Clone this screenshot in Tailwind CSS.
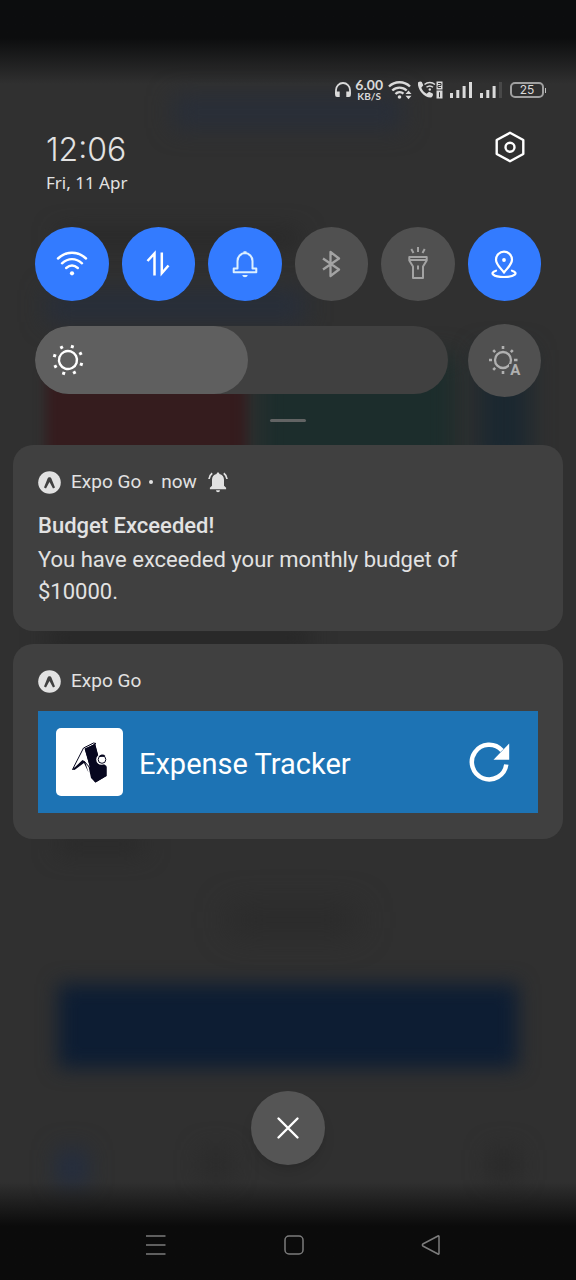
<!DOCTYPE html>
<html lang="en">
<head>
<meta charset="utf-8">
<meta name="viewport" content="width=device-width, initial-scale=1">
<title>Notification shade</title>
<script src="https://cdn.jsdelivr.net/npm/@tailwindcss/browser@4"></script>
</head>
<body class="bg-[#303030] font-[Roboto,sans-serif] text-[#e2e2e2]">
<div class="relative isolate flex min-h-screen flex-col overflow-hidden">

  <!-- Blurred app behind the shade -->
  <div class="absolute inset-0 -z-10 overflow-hidden" aria-hidden="true">
    <div class="absolute top-[96px] left-[30%] h-8 w-[40%] bg-[#282e39] blur-md"></div>
    <div class="absolute top-[232px] left-[10%] h-3 w-[42%] bg-[#242424] blur-md"></div>
    <div class="absolute top-[290px] left-[8%] h-8 w-[45%] bg-[#272e3a] blur-md"></div>
    <div class="absolute top-[372px] left-[8%] h-[110px] w-[35%] bg-[#351c1e] blur-[6px]"></div>
    <div class="absolute top-[355px] left-[45%] h-[120px] w-[34%] bg-[#1c2d2c] blur-md"></div>
    <div class="absolute top-[350px] left-[83%] h-[120px] w-[9%] bg-[#1b2830] blur-md"></div>
    <div class="absolute top-[630px] left-[8%] h-4 w-[46%] bg-[#222222] blur-md"></div>
    <div class="absolute top-[836px] left-[10%] h-4 w-[15%] bg-[#282828] blur-md"></div>
    <div class="absolute top-[908px] left-[40%] h-6 w-[22%] bg-[#292929] blur-lg"></div>
    <div class="absolute top-[984px] left-[10%] h-[84px] w-[80%] bg-[#0d1d33] blur-[10px]"></div>
    <div class="absolute top-[1150px] left-[10%] h-[36px] w-[5%] bg-[#222d42] blur-md"></div>
    <div class="absolute top-[1150px] left-[35%] h-[30px] w-[5%] bg-[#2a2a2a] blur-md"></div>
    <div class="absolute top-[1150px] left-[85%] h-[30px] w-[5%] bg-[#282828] blur-md"></div>
    <div class="absolute inset-x-0 top-0 h-[84px] bg-linear-to-b from-[#0c0d0e] from-45% to-transparent"></div>
    <div class="absolute inset-x-0 bottom-0 h-[98px] bg-linear-to-t from-[#0b0b0b] from-55% to-transparent"></div>
  </div>

  <!-- Status bar -->
  <header class="mt-[78px] flex h-6 items-center justify-end pr-[30px] text-[#dadada]">
    <svg class="h-5 w-[18px]" viewBox="0 0 18 20" fill="none" stroke="currentColor" stroke-width="1.8" role="img" aria-label="Headphones"><path d="M2 14V10a7 7 0 0 1 14 0v4"/><path d="M1.100 11.500h4.600V17H3a1.900 1.900 0 0 1-1.900-1.900zM16.900 11.500h-4.600V17H15a1.900 1.900 0 0 0 1.900-1.900z" fill="currentColor" stroke="none"/></svg>
    <p class="ml-[3px] flex flex-col items-center font-[Lato,sans-serif] font-bold"><span class="text-[14px] leading-[12px]">6.00</span><span class="text-[10px] leading-[10px]">KB/S</span></p>
    <svg class="ml-[5px] h-5 w-6" viewBox="0 0 24 20" fill="none" stroke="currentColor" stroke-width="2.400" role="img" aria-label="Wi-Fi"><path d="M1 6.500a15 15 0 0 1 21 0M4.300 10.500a10.500 10.500 0 0 1 14.400 0M7.500 14a6 6 0 0 1 8-.3"/><circle cx="11.500" cy="17" r="1.800" fill="currentColor" stroke="none"/><path d="M17.500 14l3-3.400 3 3.400zM17.500 15.800l3 3.400 3-3.400z" fill="currentColor" stroke="none"/></svg>
    <svg class="ml-[5px] h-5 w-[27px]" viewBox="0 0 27 20" fill="none" stroke="currentColor" role="img" aria-label="Wi-Fi calling"><path d="M1 2.500c1-1 3-1.500 3.800-.5l1.500 3.200-2 2.600c1 2.700 2.700 4.500 5.300 5.900l2.500-2 3.600 1.800c.8 1-.2 3.500-1.500 4C8.500 18.500 0 10 1 2.500z" fill="currentColor" stroke="none"/><path d="M7.500 4.500a8 8 0 0 1 10.500 0M9.500 7.300a5 5 0 0 1 6.500 0" stroke-width="1.500"/><circle cx="12.800" cy="9.500" r="1.200" fill="currentColor" stroke="none"/><path d="M19.500 1.500h6v8h-6zM19.500 10.500h6v8h-6z" fill="currentColor" stroke="none"/><path d="M21 3.500h3v2h-3v2h3M22.500 12.200v5" stroke="#303030"/></svg>
    <svg class="ml-[5px] h-5 w-6" viewBox="0 0 24 20" fill="currentColor" role="img" aria-label="SIM 1 signal"><path d="M1 13h3v5H1zM7.300 10h3v8h-3zM13.600 6h3v12h-3zM20 2h3v16h-3z"/></svg>
    <svg class="ml-[6px] h-5 w-6" viewBox="0 0 24 20" fill="currentColor" role="img" aria-label="SIM 2 signal"><path d="M1 13h3v5H1zM7.300 10h3v8h-3zM13.600 6h3v12h-3z"/><path d="M20 2h3v16h-3z" fill="#484848"/></svg>
    <p class="ml-[7px] flex h-4 w-[34px] items-center justify-center rounded-[5px] border-2 border-[#a0a0a0] font-[Inter,sans-serif] text-[12px] leading-3" aria-label="Battery 25 percent">25</p>
    <span class="ml-px h-[5px] w-px bg-[#c0c0c0]"></span>
  </header>

  <section class="flex items-start justify-between pt-[27px] pr-[51px] pl-[46px]">
    <div>
      <p class="font-[Inter,sans-serif] text-[32px] leading-[42px] font-light">12:06</p>
      <p class="font-['Noto_Sans',sans-serif] text-[17px] leading-6">Fri, 11 Apr</p>
    </div>
    <button aria-label="Settings" class="mt-[2px] text-white">
      <svg class="h-8 w-[30px]" viewBox="0 0 30 32" fill="none" stroke="currentColor" stroke-width="2.400" stroke-linejoin="round"><path d="M15 1.800L28.300 9v14L15 30.200 1.700 23V9z"/><circle cx="15" cy="16.300" r="4.500"/></svg>
    </button>
  </section>

  <!-- Quick toggles -->
  <section class="mt-[32px] grid grid-cols-6 gap-x-[13px] px-[35px]">
    <button aria-label="Wi-Fi" aria-pressed="true" class="flex aspect-square items-center justify-center rounded-full bg-[#337bff] text-white"><svg class="h-8 w-8" viewBox="0 0 32 32" fill="none" stroke="currentColor" stroke-width="2.400" stroke-linecap="round"><path d="M2 10.500c8.500-7.600 19.500-7.600 28 0M6 15.300c6-5.600 14-5.600 20 0M10.200 20c3.600-3 8-3 11.600 0"/><circle cx="16" cy="25.300" r="2.100" fill="currentColor" stroke="none"/></svg></button>
    <button aria-label="Mobile data" aria-pressed="true" class="flex aspect-square items-center justify-center rounded-full bg-[#337bff] text-white"><svg class="h-8 w-8" viewBox="0 0 32 32" fill="none" stroke="currentColor" stroke-width="2.500"><path d="M5.500 13l7-7.500V27.500M19.800 4.500V25.200l6.700-7.700"/></svg></button>
    <button aria-label="Ring" aria-pressed="true" class="flex aspect-square items-center justify-center rounded-full bg-[#337bff] text-[#dcefff]"><svg class="h-8 w-8" viewBox="0 0 32 32" fill="none" stroke="currentColor" stroke-width="2" stroke-linejoin="round"><path d="M16 5a8 8 0 0 0-7.500 8v7.500h-3.800v3.700h22.600v-3.700h-3.800V13A8 8 0 0 0 16 5z"/><path d="M14.500 5V3.300h3V5zM13.300 27h5.400c-.5 3-4.900 3-5.400 0z" fill="currentColor" stroke="none"/></svg></button>
    <button aria-label="Bluetooth" aria-pressed="false" class="flex aspect-square items-center justify-center rounded-full bg-[#505050] text-[#a3a3a3]"><svg class="h-8 w-8" viewBox="0 0 32 32" fill="none" stroke="currentColor" stroke-width="2.300" stroke-linejoin="round"><path d="M8 10.500l16 11-8.500 6.500V4L24 10.500 8 21.500"/></svg></button>
    <button aria-label="Flashlight" aria-pressed="false" class="flex aspect-square items-center justify-center rounded-full bg-[#505050] text-[#a3a3a3]"><svg class="h-9 w-8" viewBox="0 0 32 36" fill="none" stroke="currentColor" stroke-width="2" stroke-linejoin="round"><path d="M7.300 11h17.400v3.500l-3.700 6V32H11V20.500l-3.700-6zM8 14h16M16 19.500v4M16 1v5M9.300 3l2.200 4M22.700 3l-2.200 4"/></svg></button>
    <button aria-label="Location" aria-pressed="true" class="flex aspect-square items-center justify-center rounded-full bg-[#337bff] text-white"><svg class="h-8 w-8" viewBox="0 0 32 32" fill="none" stroke="currentColor" stroke-width="2.200" stroke-linejoin="round"><path d="M16 24.500c-3-4-8-8-8-12.800a8 8 0 0 1 16 0c0 4.800-5 8.800-8 12.800z"/><circle cx="16" cy="12" r="1.900" fill="currentColor" stroke="none"/><path d="M8 22.700c-7 2.200-3 6.300 8 6.300s15-4.100 8-6.300" stroke-linecap="round"/></svg></button>
  </section>

  <section class="mt-[23px] grid grid-cols-6 items-center gap-x-[13px] px-[35px]">
    <label class="relative col-span-5 mr-[7px] flex h-[68px] overflow-hidden rounded-full bg-[#404040]">
      <span class="flex items-center rounded-full bg-[#5f5f5f] pl-[17px] text-white" style="width:51.6%"><svg class="h-8 w-8" viewBox="0 0 32 32" fill="none" stroke="currentColor" stroke-width="2.400"><g transform="rotate(18 16 16)"><circle cx="16" cy="16" r="9"/><path stroke-width="3" d="M16 .5v3M16 28.500v3M.5 16h3M28.500 16h3M5 5l2.100 2.100M24.900 24.900L27 27M5 27l2.100-2.100M24.900 7.100L27 5"/></g></svg></span>
      <input type="range" min="0" max="100" value="52" aria-label="Brightness" class="absolute inset-0 h-full w-full cursor-pointer opacity-0">
    </label>
    <button aria-label="Automatic brightness" aria-pressed="false" class="flex aspect-square items-center justify-center rounded-full bg-[#505050] text-[#b0b0b0]">
      <span class="relative"><svg class="h-[30px] w-[30px]" viewBox="0 0 30 30" fill="none" stroke="currentColor" stroke-width="2.300"><circle cx="14" cy="15" r="8"/><path stroke-width="2.600" d="M14 1v3M14 26v3M0 15h3M25 15h3.500M4.200 5.200l2 2M4.200 24.800l2-2M21.800 7.200l2-2"/></svg><span class="absolute -right-[2px] -bottom-px bg-[#505050] px-px text-[15px] leading-[12px] font-bold">A</span></span>
    </button>
  </section>

  <div class="mx-auto mt-[22px] h-[3px] w-9 rounded-full bg-[#626464]"></div>

  <!-- Notifications -->
  <main class="mt-[23px] flex flex-col gap-[13px] px-[13px]">
    <article class="rounded-[20px] bg-[#404040] px-[25px] pt-[25px] pb-[23px]">
      <div class="flex h-6 items-center text-[19px] leading-6">
        <svg class="mr-[10px] h-[23px] w-[23px]" viewBox="0 0 23 23" aria-hidden="true"><circle cx="11.500" cy="11.500" r="11.300" fill="#e2e2e2"/><path d="M6 16.600L9.600 7.500c.6-1.600 3.200-1.600 3.800 0L17 16.600l-2 .8-3.500-6.400L8 17.400z" fill="#404040"/></svg>
        <span>Expo Go</span><span class="mx-2 h-1 w-1 rounded-full bg-[#e2e2e2]"></span><span>now</span>
        <svg class="ml-[11px] h-[22px] w-[20px]" viewBox="0 0 20 22" fill="currentColor" role="img" aria-label="Alerting"><path d="M10 1.500c-.9 0-1.400.6-1.400 1.500C5.500 3.700 4 6 4 8.700v6L1.900 16.800V18.300h16.200v-1.500L16 14.700v-6c0-2.700-1.500-5-4.600-5.700 0-.9-.5-1.500-1.400-1.500zM8 19.200h4a2 2 0 0 1-4 0z"/><path d="M4.200 2.200A8 8 0 0 0 1 8M15.800 2.200A8 8 0 0 1 19 8" fill="none" stroke="currentColor" stroke-width="1.700"/></svg>
      </div>
      <h2 class="mt-4 text-[22px] leading-8 font-medium">Budget Exceeded!</h2>
      <p class="mt-[2px] text-[22px] leading-8">You have exceeded your monthly budget of $10000.</p>
    </article>

    <article class="rounded-[20px] bg-[#404040] px-[25px] pt-[25px] pb-[26px]">
      <div class="flex h-6 items-center text-[19px] leading-6">
        <svg class="mr-[10px] h-[23px] w-[23px]" viewBox="0 0 23 23" aria-hidden="true"><circle cx="11.500" cy="11.500" r="11.300" fill="#e2e2e2"/><path d="M6 16.600L9.600 7.500c.6-1.600 3.200-1.600 3.800 0L17 16.600l-2 .8-3.500-6.400L8 17.400z" fill="#404040"/></svg>
        <span>Expo Go</span>
      </div>
      <div class="mt-[18px] flex h-[102px] items-center bg-[#1d73b4] pr-[26px] pl-[18px] text-white">
        <svg class="h-[68px] w-[67px]" viewBox="0 0 67 68" role="img" aria-label="Expense Tracker logo"><rect width="67" height="68" rx="5" fill="#fff"/><path d="M28.500 19.500L39 15l3.500 13.500 1 4.500 7 5v10L39.500 54.500 35 50z" fill="#07071f"/><path d="M16.500 41.500L27.500 20l10-5 2.500.5-10.500 6L35 41l-6.500-7.500z" fill="#fff" stroke="#07071f" stroke-linejoin="round"/><path d="M28.500 20.500L39 16l3.500 13-2 3 2 4.500 8 2.500v9L39.500 54.500 38 53z" fill="#07071f"/><path d="M16.500 41.500l10-9.500 2.500 1.500 3.500 11-4.500-9.500-9.500 7z" fill="#07071f"/><circle cx="45.500" cy="31.500" r="5.300" fill="#fff"/><circle cx="46" cy="31.500" r="3.800" fill="#fff" stroke="#07071f"/><path d="M42.600 29a4 4 0 0 1 6.800-1l-2 .8z" fill="#07071f"/></svg>
        <span class="mt-1 ml-4 text-[29px] leading-9">Expense Tracker</span>
        <button aria-label="Reload" class="ml-auto"><svg class="h-11 w-11" viewBox="0 0 44 44"><path d="M38.300 24.500A17.300 17.300 0 1 1 34 10.500" fill="none" stroke="#fff" stroke-width="4.500"/><path d="M41.200 3.500v16.300H25.500z" fill="#fff"/></svg></button>
      </div>
    </article>
  </main>

  <button aria-label="Clear all notifications" class="mx-auto mt-[252px] flex h-[74px] w-[74px] items-center justify-center rounded-full bg-[#555555] text-white shadow-lg"><svg class="h-6 w-6" viewBox="0 0 24 24" fill="none" stroke="currentColor" stroke-width="2.400" stroke-linecap="round"><path d="M2.500 2.500l19 19M21.500 2.500l-19 19"/></svg></button>

  <nav class="mt-auto flex h-[70px] items-center justify-between pr-[133px] pl-[144px] text-[#7c7c7c]">
    <button aria-label="Recent apps"><svg class="h-6 w-6" viewBox="0 0 24 24" stroke="currentColor" stroke-width="1.500"><path d="M2 3h19.500M2 12h19.500M2 21h19.500"/></svg></button>
    <button aria-label="Home"><svg class="h-6 w-6" viewBox="0 0 24 24" fill="none" stroke="currentColor" stroke-width="1.500"><rect x="3" y="3" width="18" height="18" rx="4"/></svg></button>
    <button aria-label="Back"><svg class="h-6 w-6" viewBox="0 0 24 24" fill="none" stroke="currentColor" stroke-width="1.500" stroke-linejoin="round"><path d="M20 3.500v17q0 1-1 .5L3.800 13q-1-1 0-2L19 3q1-.5 1 .5z"/></svg></button>
  </nav>
</div>
</body>
</html>
